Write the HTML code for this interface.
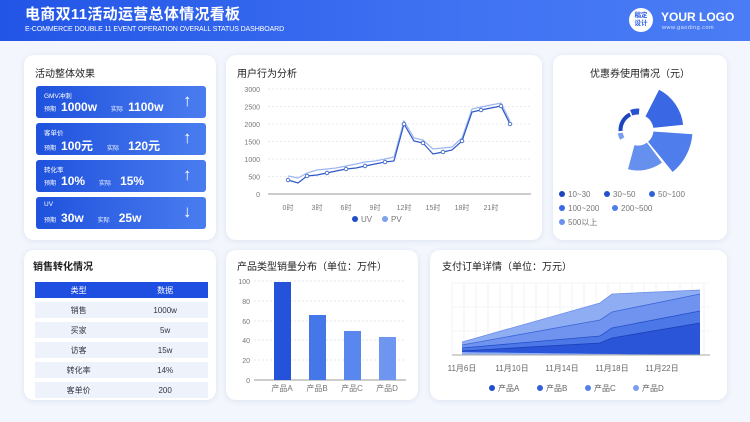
<!DOCTYPE html>
<html><head><meta charset="utf-8"><style>
*{margin:0;padding:0;box-sizing:border-box}
body{width:750px;height:422px;overflow:hidden;background:#f3f6fc;font-family:"Liberation Sans","Noto Sans CJK SC",sans-serif;position:relative}
.hdr{position:absolute;left:0;top:0;width:750px;height:41px;background:linear-gradient(90deg,#2255e6,#3f72f2 60%,#4a7cf5)}
.t1{position:absolute;left:25px;top:5px;color:#fff;font-size:15px;font-weight:bold;letter-spacing:.3px;line-height:20px}
.t2{position:absolute;left:25px;top:26px;color:#fff;font-size:7px;letter-spacing:-.1px;line-height:8px}
.logo{position:absolute;left:629px;top:8px;width:24px;height:24px;border-radius:50%;background:#fff;color:#2a5ce8;font-size:6.5px;line-height:8px;text-align:center;padding-top:4px;font-weight:bold}
.ly{position:absolute;left:661px;top:10px;color:#fff;font-size:12px;font-weight:bold}
.lw{position:absolute;left:662px;top:25px;color:#dce6ff;font-size:5.5px;letter-spacing:.5px}
.card{position:absolute;background:#fff;border-radius:10px;box-shadow:0 1px 6px rgba(60,90,160,.12)}
.ct{position:absolute;font-size:10px;color:#222}
.bx{position:absolute;left:36px;width:170px;height:32px;border-radius:3px;background:linear-gradient(90deg,#1f52dd,#4a7cf0);color:#fff}
.bx .l{position:absolute;left:8px;top:4px;font-size:6.5px}
.bx .v{position:absolute;left:8px;top:14px;font-size:6px;white-space:nowrap}
.bx .v b{font-size:12px;font-weight:bold;margin:0 14px 0 5px}
.bx .a{position:absolute;left:147px;top:5px;font-size:17px;font-weight:bold}
table{position:absolute;left:35px;top:278px;width:173px;border-collapse:separate;border-spacing:0 4px;font-size:8px;color:#334}
td,th{text-align:center;height:16px}
th{background:#1f4fe0;color:#fff;font-weight:normal}
td{background:#eef2fb}
</style></head><body>
<div class="hdr"></div>
<div class="t1">电商双11活动运营总体情况看板</div>
<div class="t2">E-COMMERCE DOUBLE 11 EVENT OPERATION OVERALL STATUS DASHBOARD</div>
<div class="logo">稿定<br>设计</div>
<div class="ly">YOUR LOGO</div>
<div class="lw">www.gaoding.com</div>

<div class="card" style="left:24px;top:55px;width:192px;height:185px"></div>
<div class="ct" style="left:35px;top:65px">活动整体效果</div>
<div class="bx" style="top:86px"><div class="l">GMV冲刺</div><div class="v">预期<b>1000w</b>实际<b>1100w</b></div><div class="a">↑</div></div>
<div class="bx" style="top:123px"><div class="l">客单价</div><div class="v">预期<b>100元</b>实际<b style="margin-left:9px">120元</b></div><div class="a">↑</div></div>
<div class="bx" style="top:160px"><div class="l">转化率</div><div class="v">预期<b>10%</b>实际<b style="margin-left:9px">15%</b></div><div class="a">↑</div></div>
<div class="bx" style="top:197px"><div class="l">UV</div><div class="v">预期<b>30w</b>实际<b style="margin-left:9px">25w</b></div><div class="a">↓</div></div>

<div class="card" style="left:226px;top:55px;width:316px;height:185px"></div>
<div class="ct" style="left:237px;top:65px">用户行为分析</div>
<svg style="position:absolute;left:226px;top:55px" width="316" height="185" font-family="Liberation Sans" font-size="7" fill="#777">
<g stroke="#e6e9f0" stroke-dasharray="2 2">
<line x1="42" y1="34" x2="305" y2="34"/><line x1="42" y1="51.5" x2="305" y2="51.5"/><line x1="42" y1="69" x2="305" y2="69"/><line x1="42" y1="86.5" x2="305" y2="86.5"/><line x1="42" y1="104" x2="305" y2="104"/><line x1="42" y1="121.5" x2="305" y2="121.5"/>
</g>
<line x1="42" y1="139" x2="305" y2="139" stroke="#999"/>
<g text-anchor="end"><text x="34" y="37">3000</text><text x="34" y="54.5">2500</text><text x="34" y="72">2000</text><text x="34" y="89.5">1500</text><text x="34" y="107">1000</text><text x="34" y="124.5">500</text><text x="34" y="142">0</text></g>
<g text-anchor="middle"><text x="62" y="155">0时</text><text x="91" y="155">3时</text><text x="120" y="155">6时</text><text x="149" y="155">9时</text><text x="178" y="155">12时</text><text x="207" y="155">15时</text><text x="236" y="155">18时</text><text x="265" y="155">21时</text></g>
<polyline fill="none" stroke="#9db6f0" stroke-width="1.2" points="62,121 72,123 81,118 91,115 101,114 110,113 120,111 130,109 139,107 149,106 159,104 168,102 178,66 188,83 197,85 207,94 217,93 226,92 236,83 246,54 255,52 265,50 275,48 284,66"/>
<polyline fill="none" stroke="#2c58c8" stroke-width="1.2" points="62,125 72,128 81,121 91,120 101,118 110,116 120,114 130,113 139,111 149,109 159,107 168,106 178,69 188,86 197,88 207,99 217,97 226,95 236,86 246,57 255,55 265,53 275,51 284,69"/>
<g fill="#fff" stroke="#2c58c8" stroke-width=".8">
<circle cx="62" cy="125" r="1.8"/><circle cx="81" cy="121" r="1.8"/><circle cx="101" cy="118" r="1.8"/><circle cx="120" cy="114" r="1.8"/><circle cx="139" cy="111" r="1.8"/><circle cx="159" cy="107" r="1.8"/><circle cx="178" cy="69" r="1.8"/><circle cx="197" cy="88" r="1.8"/><circle cx="217" cy="97" r="1.8"/><circle cx="236" cy="86" r="1.8"/><circle cx="255" cy="55" r="1.8"/><circle cx="275" cy="51" r="1.8"/><circle cx="284" cy="69" r="1.8"/>
</g>
<circle cx="129" cy="164" r="3" fill="#1f4fc8"/><text x="135" y="167" font-size="8">UV</text>
<circle cx="159" cy="164" r="3" fill="#7ea0ee"/><text x="165" y="167" font-size="8">PV</text>
</svg>

<div class="card" style="left:553px;top:55px;width:174px;height:185px"></div>
<div class="ct" style="left:590px;top:65px">优惠券使用情况（元）</div>
<svg style="position:absolute;left:553px;top:55px" width="174" height="185" font-family="Liberation Sans" font-size="8" fill="#777">
<g transform="translate(85,75)" stroke="#fff" stroke-width="1">
<path d="M6.8,-13.4 L20.9,-41 A46,46 0 0 1 45.7,-4.8 L14.9,-1.6 A15,15 0 0 0 6.8,-13.4Z" fill="#3a67e4"/>
<path d="M15,1 L54.9,3.8 A55,55 0 0 1 34.6,42.7 L9.4,11.7 A15,15 0 0 0 15,1Z" fill="#4f7deb"/>
<path d="M9,12 L24.7,32.7 A41,41 0 0 1 -10.6,39.6 L-3.9,14.5 A15,15 0 0 0 9,12Z" fill="#6690ee"/>
<path d="M-13,7.5 L-18.2,10.5 A21,21 0 0 1 -20.8,2.9 L-14.9,2.1 A15,15 0 0 0 -13,7.5Z" fill="#7a9ef0"/>
<path d="M-14.9,1.3 L-19.9,1.7 A20,20 0 0 1 -8.5,-18.1 L-6.3,-13.6 A15,15 0 0 0 -14.9,1.3Z" fill="#1c45c0"/>
<path d="M-5.9,-13.8 L-8.6,-20.3 A22,22 0 0 1 1.9,-21.9 L1.3,-14.9 A15,15 0 0 0 -5.9,-13.8Z" fill="#2853d0"/>
</g>
<g><circle cx="9" cy="139" r="3" fill="#1c45c0"/><text x="15" y="142">10~30</text>
<circle cx="54" cy="139" r="3" fill="#2550cc"/><text x="60" y="142">30~50</text>
<circle cx="99" cy="139" r="3" fill="#3060d8"/><text x="105" y="142">50~100</text>
<circle cx="9" cy="153" r="3" fill="#3a67e4"/><text x="15" y="156">100~200</text>
<circle cx="62" cy="153" r="3" fill="#4f7deb"/><text x="68" y="156">200~500</text>
<circle cx="9" cy="167" r="3" fill="#6b92ee"/><text x="15" y="170">500以上</text></g>
</svg>

<div class="card" style="left:24px;top:250px;width:192px;height:150px"></div>
<div class="ct" style="left:33px;top:258px;font-weight:bold">销售转化情况</div>
<table>
<tr><th>类型</th><th>数据</th></tr>
<tr><td>销售</td><td>1000w</td></tr>
<tr><td>买家</td><td>5w</td></tr>
<tr><td>访客</td><td>15w</td></tr>
<tr><td>转化率</td><td>14%</td></tr>
<tr><td>客单价</td><td>200</td></tr>
</table>

<div class="card" style="left:226px;top:250px;width:192px;height:150px"></div>
<div class="ct" style="left:237px;top:258px">产品类型销量分布（单位：万件）</div>
<svg style="position:absolute;left:226px;top:250px" width="192" height="150" font-family="Liberation Sans" font-size="7" fill="#777">
<g stroke="#e3e7ef" stroke-dasharray="2 2"><line x1="28" y1="31" x2="180" y2="31"/><line x1="28" y1="51" x2="180" y2="51"/><line x1="28" y1="71" x2="180" y2="71"/><line x1="28" y1="90" x2="180" y2="90"/><line x1="28" y1="110" x2="180" y2="110"/></g>
<line x1="28" y1="130" x2="180" y2="130" stroke="#999"/>
<g text-anchor="end"><text x="24" y="34">100</text><text x="24" y="54">80</text><text x="24" y="74">60</text><text x="24" y="93">40</text><text x="24" y="113">20</text><text x="24" y="133">0</text></g>
<rect x="48" y="32" width="17" height="98" fill="#2452d8"/>
<rect x="83" y="65" width="17" height="65" fill="#4677e8"/>
<rect x="118" y="81" width="17" height="49" fill="#5a87ee"/>
<rect x="153" y="87" width="17" height="43" fill="#6e96f0"/>
<g text-anchor="middle" font-size="8"><text x="56" y="141">产品A</text><text x="91" y="141">产品B</text><text x="126" y="141">产品C</text><text x="161" y="141">产品D</text></g>
</svg>

<div class="card" style="left:430px;top:250px;width:297px;height:150px"></div>
<div class="ct" style="left:442px;top:258px">支付订单详情（单位：万元）</div>
<svg style="position:absolute;left:430px;top:250px" width="297" height="150" font-family="Liberation Sans" font-size="8" fill="#666">
<g stroke="#e8ebf2" stroke-width=".6">
<line x1="22" y1="33" x2="280" y2="33"/><line x1="22" y1="57" x2="280" y2="57"/><line x1="22" y1="81" x2="280" y2="81"/>
<line x1="22" y1="33" x2="22" y2="105"/><line x1="34" y1="33" x2="34" y2="105"/><line x1="46" y1="33" x2="46" y2="105"/><line x1="58" y1="33" x2="58" y2="105"/><line x1="70" y1="33" x2="70" y2="105"/><line x1="82" y1="33" x2="82" y2="105"/><line x1="94" y1="33" x2="94" y2="105"/><line x1="106" y1="33" x2="106" y2="105"/><line x1="118" y1="33" x2="118" y2="105"/><line x1="130" y1="33" x2="130" y2="105"/><line x1="142" y1="33" x2="142" y2="105"/><line x1="154" y1="33" x2="154" y2="105"/><line x1="166" y1="33" x2="166" y2="105"/><line x1="178" y1="33" x2="178" y2="105"/><line x1="190" y1="33" x2="190" y2="105"/><line x1="202" y1="33" x2="202" y2="105"/><line x1="214" y1="33" x2="214" y2="105"/><line x1="226" y1="33" x2="226" y2="105"/><line x1="238" y1="33" x2="238" y2="105"/><line x1="250" y1="33" x2="250" y2="105"/><line x1="262" y1="33" x2="262" y2="105"/><line x1="274" y1="33" x2="274" y2="105"/>
</g>
<path d="M32,102 L32,92 L170,53 L182,44 L270,40 L270,105 L32,105Z" fill="#8eadf3"/>
<path d="M32,102 L32,95 L170,70 L182,62 L270,44 L270,105Z" fill="#6f93ee"/>
<path d="M32,102 L32,98 L170,86 L182,78 L270,61 L270,105Z" fill="#4c77e6"/>
<path d="M32,102 L32,101 L170,93 L182,88 L270,73 L270,105Z" fill="#2a55d8"/>
<polyline fill="none" stroke="#6d8fe8" stroke-width=".8" points="32,92 170,53 182,44 270,40"/>
<polyline fill="none" stroke="#3d66d8" stroke-width=".8" points="32,95 170,70 182,62 270,44"/>
<polyline fill="none" stroke="#2350cc" stroke-width=".8" points="32,98 170,86 182,78 270,61"/>
<polyline fill="none" stroke="#1a3fb8" stroke-width=".8" points="32,101 170,93 182,88 270,73"/>
<line x1="22" y1="105" x2="280" y2="105" stroke="#aaa"/>
<g text-anchor="middle"><text x="32" y="121">11月6日</text><text x="82" y="121">11月10日</text><text x="132" y="121">11月14日</text><text x="182" y="121">11月18日</text><text x="232" y="121">11月22日</text></g>
<circle cx="62" cy="138" r="3" fill="#1f4fc8"/><text x="68" y="141">产品A</text>
<circle cx="110" cy="138" r="3" fill="#3560d8"/><text x="116" y="141">产品B</text>
<circle cx="158" cy="138" r="3" fill="#5580e8"/><text x="164" y="141">产品C</text>
<circle cx="206" cy="138" r="3" fill="#7a9ef0"/><text x="212" y="141">产品D</text>
</svg>
</body></html>
